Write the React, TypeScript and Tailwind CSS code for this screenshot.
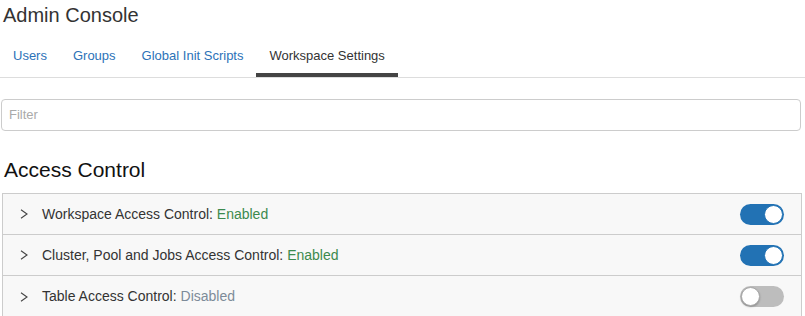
import React from "react";

const Toggle = ({ on }: { on: boolean }) =>
  on ? (
    <div className="w-[44px] h-[21px] rounded-full bg-[#2272b4] flex items-center justify-end pr-[1px]">
      <div className="w-[19px] h-[19px] rounded-full bg-white border border-[#2272b4]" />
    </div>
  ) : (
    <div className="w-[44px] h-[21px] rounded-full bg-[#bdbdbd] flex items-center justify-start pl-[1px]">
      <div className="w-[19px] h-[19px] rounded-full bg-white border border-[#a8a8a8] shadow-[0_1px_2px_rgba(0,0,0,0.25)]" />
    </div>
  );

const Row = ({ label, on, last }: { label: string; on: boolean; last?: boolean }) => (
  <div className={`h-[41px] flex items-center bg-[#f8f8f8] ${last ? "" : "border-b border-[#cccccc]"}`}>
    <svg className="ml-[17px] w-[8px] h-[10px]" viewBox="0 0 8 10">
      <path d="M1 0.8 L7 5 L1 9.2" fill="none" stroke="#444" strokeWidth="1.1" />
    </svg>
    <span className="ml-[14px] text-[14px] text-[#333]">
      {label}:{" "}
      <span className={on ? "text-[#3c8a4e]" : "text-[#7d8b99]"}>{on ? "Enabled" : "Disabled"}</span>
    </span>
    <div className="ml-auto mr-[17px]">
      <Toggle on={on} />
    </div>
  </div>
);

export default function App() {
  return (
    <div className="w-[805px] h-[316px] overflow-hidden bg-white font-['Liberation_Sans',Arial,sans-serif]">
      <div className="pl-[3px] pt-[3px] text-[20px] leading-[24px] text-[#333]">Admin Console</div>
      <div className="mt-[11px] flex border-b border-[#dddddd] h-[40px]">
        {["Users", "Groups", "Global Init Scripts", "Workspace Settings"].map((t, i) => (
          <div
            key={t}
            className={`px-[13px] flex items-center text-[13px] border-b-4 ${
              i === 3 ? "text-[#333] border-[#444]" : "text-[#2c72b8] border-transparent"
            }`}
          >
            {t}
          </div>
        ))}
      </div>
      <div className="mt-[21px] ml-[1px] w-[800px] h-[32px] border border-[#cccccc] rounded-[4px] flex items-center pl-[7px] text-[13px] text-[#aaaaaa]">
        Filter
      </div>
      <div className="mt-[27px] pl-[4px] text-[21px] leading-[24px] text-[#111]">Access Control</div>
      <div className="mt-[11px] ml-[2px] w-[800px] border border-[#cccccc] border-b-0">
        <Row label="Workspace Access Control" on={true} />
        <Row label="Cluster, Pool and Jobs Access Control" on={true} />
        <Row label="Table Access Control" on={false} last />
      </div>
    </div>
  );
}
